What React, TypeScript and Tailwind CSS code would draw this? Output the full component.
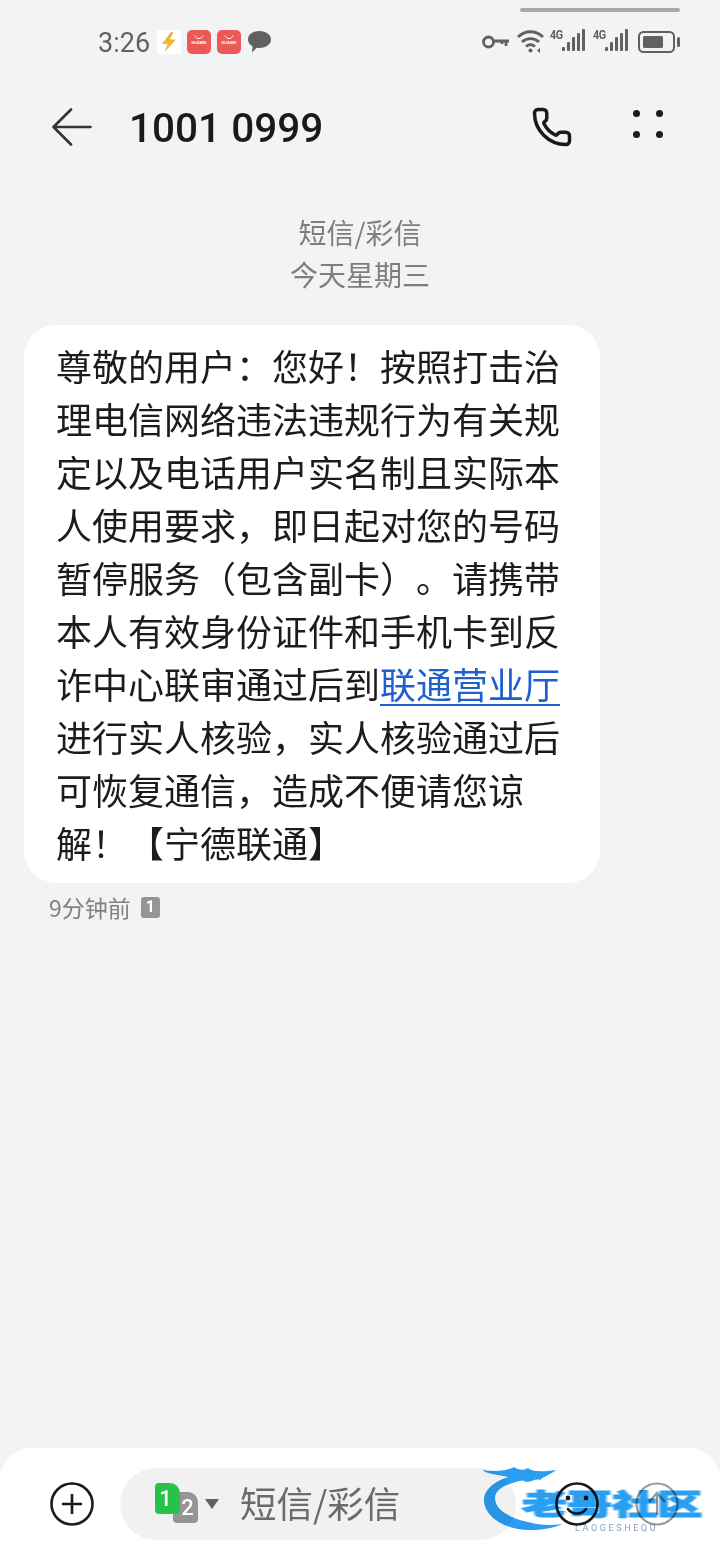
import React from 'react';
import { Phone } from 'lucide-react';

const cjk = "font-['Noto_Sans_CJK_SC','Noto_Sans',sans-serif]";

const messageLines = [
    '尊敬的用户：您好！按照打击治',
    '理电信网络违法违规行为有关规',
    '定以及电话用户实名制且实际本',
    '人使用要求，即日起对您的号码',
    '暂停服务（包含副卡）。请携带',
    '本人有效身份证件和手机卡到反',
];

const messageLinesAfter = [
    '进行实人核验，实人核验通过后',
    '可恢复通信，造成不便请您谅',
    '解！【宁德联通】',
];

const Signal = () => (
    <div className="flex items-start w-[36px] h-[24px]">
        <span className="text-[12px] leading-[13px] font-bold text-[#5f6163] font-['Roboto',sans-serif] tracking-[-0.5px] w-[12px] scale-x-90 origin-left">4G</span>
        <svg width="24" height="24" viewBox="0 0 24 24" fill="#5f6163">
            <rect x="0" y="18" width="3" height="4" rx="1" />
            <rect x="5" y="13" width="3" height="9" rx="1" />
            <rect x="10" y="8" width="3" height="14" rx="1" />
            <rect x="15" y="4" width="3" height="18" rx="1" />
            <rect x="20" y="0" width="3" height="22" rx="1" />
        </svg>
    </div>
);

const HuaweiBadge = () => (
    <div className="w-[24px] h-[24px] rounded-[5px] bg-[#ec5a58] flex flex-col items-center pt-[5px]">
        <svg width="10" height="5" viewBox="0 0 10 5" fill="none" stroke="#fff" strokeWidth="1">
            <path d="M1 0.5 C2 4.5 8 4.5 9 0.5" />
        </svg>
        <span className="text-[4px] leading-[6px] text-white font-['Roboto',sans-serif] font-bold">HUAWEI</span>
    </div>
);

const StatusBar = () => (
    <div className="relative h-[84px] flex items-center justify-between pl-[98px] pr-[40px]">
        <div className="absolute right-[40px] top-[8px] w-[160px] h-[4px] rounded-full bg-[#a9aaac]" />
        <div className="flex items-center">
            <span className="text-[27px] leading-none text-[#5f6163] font-['Roboto',sans-serif] w-[59px] pt-[2px]">3:26</span>
            <div className="w-[24px] h-[24px] bg-white flex items-center justify-center mr-[6px]">
                <svg width="16" height="20" viewBox="0 0 16 20" fill="#f2b632">
                    <path d="M10 0 L1 12 H6.5 L3.5 20 L15 7.5 H9 L12.5 0 Z" />
                </svg>
            </div>
            <div className="mr-[6px]"><HuaweiBadge /></div>
            <HuaweiBadge />
            <svg className="ml-[7px]" width="23" height="22" viewBox="0 0 23 22" fill="#5f6163">
                <path d="M11.5 0 C18 0 23 3.6 23 8.5 C23 13.4 18 17 11.5 17 C10.5 17 9.6 16.9 8.7 16.8 L4 21.5 L4.5 15.3 C1.8 13.8 0 11.3 0 8.5 C0 3.6 5 0 11.5 0 Z" />
            </svg>
        </div>
        <div className="flex items-center">
            <svg width="28" height="14" viewBox="0 0 28 14" fill="none" stroke="#5f6163" strokeWidth="2.8">
                <circle cx="6.5" cy="7" r="5" />
                <path d="M11 6 H27 M24 6 V11 M20 6 V9" />
            </svg>
            <svg className="ml-[7px]" width="28" height="24" viewBox="0 0 28 24" fill="none" stroke="#5f6163" strokeWidth="2.8">
                <path d="M1 7 C8 0 19 0 26 7" />
                <path d="M5 12 C10 7.5 17 7.5 22 12" />
                <path d="M9 16.5 C12 14 15 14 18 16.5" />
                <circle cx="13.5" cy="20.5" r="2" fill="#5f6163" stroke="none" />
                <path d="M20 20.5 L23 18 V23 Z M24.5 18 V23" fill="#5f6163" stroke="none" />
            </svg>
            <div className="ml-[5px] mb-[2px]"><Signal /></div>
            <div className="ml-[7px] mb-[2px]"><Signal /></div>
            <svg className="ml-[9px]" width="42" height="22" viewBox="0 0 42 22" fill="none">
                <rect x="1" y="1" width="35" height="20" rx="4.5" stroke="#5f6163" strokeWidth="2" />
                <rect x="5" y="5" width="20" height="12" rx="1.5" fill="#5f6163" />
                <rect x="39" y="6" width="3" height="10" rx="1.5" fill="#5f6163" />
            </svg>
        </div>
    </div>
);

const Header = () => (
    <div className="h-[86px] flex items-center pl-[51px] pr-[57px]">
        <svg width="41" height="38" viewBox="0 0 41 38" fill="none" stroke="#333" strokeWidth="2.6" strokeLinecap="round" strokeLinejoin="round">
            <path d="M20 1.5 L2.5 19 L20 36.5 M2.5 19 H39.5" />
        </svg>
        <span className="ml-[37px] pt-[3px] text-[40.5px] leading-none font-medium text-[#1a1a1a] font-['Roboto',sans-serif] flex-1">1001 0999</span>
        <Phone size={42} strokeWidth={2} className="text-[#1a1a1a] mr-[60px] ml-[4px]" />
        <div className="grid grid-cols-2 gap-x-[16px] gap-y-[14px] mb-[6px]">
            <span className="w-[7px] h-[7px] rounded-full bg-[#1a1a1a]" />
            <span className="w-[7px] h-[7px] rounded-full bg-[#1a1a1a]" />
            <span className="w-[7px] h-[7px] rounded-full bg-[#1a1a1a]" />
            <span className="w-[7px] h-[7px] rounded-full bg-[#1a1a1a]" />
        </div>
    </div>
);

const MessageBubble = () => (
    <div className="mt-[30px] ml-[24px] w-[576px] rounded-[32px] bg-white pl-[32px] py-[14px] text-[36px] leading-[53px] text-[#1c1c1c] whitespace-pre [text-spacing-trim:space-all]">
        {messageLines.map(line => (
            <div key={line}>{line}</div>
        ))}
        <div>
            诈中心联审通过后到<span className="text-[#1f5fd0] underline underline-offset-[5px] decoration-2">联通营业厅</span>
        </div>
        {messageLinesAfter.map(line => (
            <div key={line}>{line}</div>
        ))}
    </div>
);

// sits over the composer icons, multiply keeps their dark strokes visible
const Watermark = () => (
    <div className="absolute left-[480px] top-[16px] w-[230px] h-[72px] pointer-events-none mix-blend-multiply">
        <svg className="absolute left-0 top-0 blur-[0.7px]" width="110" height="72" viewBox="0 0 110 72" fill="#2a9df0">
            <path d="M38 10 C14 16 4 26 4 36 C4 52 24 66 50 66 C62 66 74 64 82 60 C70 62 58 61 48 58 C30 54 15 46 15 34 C15 26 24 20 44 16 Z" />
            <path d="M2 6 C14 8 26 7 34 3 C38 6 44 7 48 4 C52 8 62 8 76 6 C70 11 64 12 60 16 C54 14 50 20 44 17 C36 14 26 13 18 11 C12 10 6 9 2 6 Z" />
        </svg>
        <span className="absolute left-[42px] top-[24px] text-[28px] leading-[30px] font-black whitespace-nowrap origin-left scale-x-[1.61] text-[#2a9ff2] [-webkit-text-stroke:1.2px_#2a9ff2] blur-[0.7px]">老哥社区</span>
        <span className="absolute left-[95px] top-[60px] text-[9px] leading-[9px] tracking-[2.6px] text-[#8aa3bb] font-['Roboto',sans-serif] blur-[0.3px]">LAOGESHEQU</span>
    </div>
);

const Composer = () => (
    <div className="relative mt-auto h-[112px] rounded-t-[32px] bg-white flex items-center pl-[50px]">
        <svg width="44" height="44" viewBox="0 0 44 44" fill="none" stroke="#1a1a1a" strokeWidth="2.6">
            <circle cx="22" cy="22" r="20.5" />
            <path d="M12 22 H32 M22 12 V32" />
        </svg>
        <div className="ml-[26px] w-[396px] h-[72px] rounded-[36px] bg-[#f1f1f1] flex items-center pl-[35px]">
            <div className="relative w-[44px] h-[40px] mb-[2px]">
                <div className="absolute left-[18px] top-[9px] w-[25px] h-[31px] rounded-[4px] rounded-tr-[10px] bg-[#959595] flex items-center justify-center pl-[4px] text-[22px] font-medium text-white font-['Roboto',sans-serif]">2</div>
                <div className="absolute left-0 top-0 w-[25px] h-[31px] rounded-[4px] rounded-tr-[10px] bg-[#27c24c] flex items-center justify-center pr-[4px] text-[22px] font-medium text-white font-['Roboto',sans-serif]">1</div>
            </div>
            <svg className="ml-[6px]" width="14" height="10" viewBox="0 0 14 10" fill="#5f6163">
                <path d="M0 0 H14 L7 10 Z" />
            </svg>
            <span className="ml-[21px] mb-[2px] text-[36.5px] leading-none text-[#6b6b6b]">短信/彩信</span>
        </div>
        <svg className="ml-[39px]" width="44" height="44" viewBox="0 0 44 44" fill="none" stroke="#1a1a1a" strokeWidth="2.6">
            <circle cx="22" cy="22" r="20.5" />
            <circle cx="13" cy="16" r="2.4" fill="#1a1a1a" stroke="none" />
            <circle cx="31" cy="16" r="2.4" fill="#1a1a1a" stroke="none" />
            <path d="M13 27 C17 33 27 33 31 27" strokeLinecap="round" />
        </svg>
        <svg className="ml-[36px]" width="44" height="44" viewBox="0 0 44 44" fill="none" stroke="#9a9a9a" strokeWidth="2.2">
            <circle cx="22" cy="22" r="20.5" />
            <path d="M22 33 V12 M14 20 L22 11 L30 20" />
        </svg>
        <Watermark />
    </div>
);

const App = () => {
    return (
        <div className={`w-[720px] h-[1560px] bg-[#f1f3f5] flex flex-col overflow-hidden ${cjk}`}>
            <StatusBar />
            <Header />
            <div className="pt-[41px] text-center text-[28px] leading-[42px] text-[#7d7e80]">
                <div>短信/彩信</div>
                <div>今天星期三</div>
            </div>
            <MessageBubble />
            <div className="mt-[9px] ml-[49px] flex items-center h-[30px]">
                <span className="text-[23px] leading-none text-[#808183]">9分钟前</span>
                <span className="ml-[10px] w-[19px] h-[21px] rounded-[3px] bg-[#949596] flex items-center justify-center text-[16px] font-bold text-white font-['Roboto',sans-serif]">1</span>
            </div>
            <Composer />
        </div>
    );
};

export default App;
